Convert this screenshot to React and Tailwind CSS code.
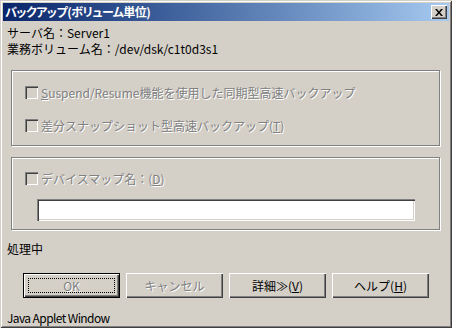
import React from "react";

const font = { fontFamily: '"Noto Sans CJK JP", "Liberation Sans", sans-serif' };

const raised =
  "shadow-[inset_1px_1px_0_#fff,inset_-1px_-1px_0_#404040,inset_-2px_-2px_0_#808080]";
const sunken =
  "shadow-[inset_1px_1px_0_#808080,inset_2px_2px_0_#404040,inset_-1px_-1px_0_#fff,inset_-2px_-2px_0_#d4d0c8]";
const etched = "border border-[#808080] shadow-[inset_1px_1px_0_#fff,1px_1px_0_#fff]";
const disabledText = "text-[#808080] [text-shadow:1px_1px_0_#fff]";

const Check = ({ children }) => (
  <div className="flex items-center h-[13px]">
    <span className={`w-[13px] h-[13px] bg-[#d4d0c8] shrink-0 ${sunken}`} />
    <span className={`ml-[3px] leading-[16px] whitespace-nowrap ${disabledText}`}>{children}</span>
  </div>
);

const Button = ({ children, disabled, isDefault }) => (
  <div
    className={`w-[97px] h-[25px] flex items-center justify-center bg-[#d4d0c8] relative ${
      isDefault ? "border border-black" : ""
    } ${raised} ${disabled ? disabledText : "text-black"}`}
  >
    {isDefault && (
      <span className="absolute left-[4px] right-[4px] top-[4px] bottom-[4px] border border-dotted border-black" />
    )}
    <span className="leading-[16px] whitespace-nowrap">{children}</span>
  </div>
);

export default function App() {
  return (
    <div
      className="w-[452px] h-[328px] bg-[#d4d0c8] p-[3px] text-[12px] text-black shadow-[inset_1px_1px_0_#d4d0c8,inset_-1px_-1px_0_#404040,inset_2px_2px_0_#fff,inset_-2px_-2px_0_#808080] overflow-hidden"
      style={font}
    >
      {/* title bar */}
      <div className="h-[18px] flex items-center justify-between bg-gradient-to-r from-[#0a246a] to-[#a6caf0] pl-[2px] pr-[2px]">
        <span className="text-white font-bold leading-[16px] whitespace-nowrap [font-feature-settings:'palt'] tracking-[-0.5px]">
          バックアップ(ボリューム単位)
        </span>
        <div className={`w-[16px] h-[14px] bg-[#d4d0c8] flex items-center justify-center ${raised}`}>
          <svg width="8" height="7" viewBox="0 0 8 7">
            <path d="M0 0h2l2 2.5L6 0h2L5 3.5 8 7H6L4 4.5 2 7H0l3-3.5z" fill="#000" />
          </svg>
        </div>
      </div>

      <div className="pl-[4px] pt-[4px]">
        <div className="leading-[16px] whitespace-nowrap">サーバ名：Server1</div>
        <div className="leading-[16px] whitespace-nowrap">業務ボリューム名：/dev/dsk/c1t0d3s1</div>
      </div>

      {/* group 1 */}
      <div className={`ml-[8px] mt-[13px] w-[429px] h-[76px] ${etched} pl-[13px] pt-[15px] flex flex-col gap-[20px]`}>
        <Check>
          <span className="underline">S</span>uspend/Resume機能を使用した同期型高速バックアップ
        </Check>
        <Check>
          差分スナップショット型高速バックアップ(<span className="underline">T</span>)
        </Check>
      </div>

      {/* group 2 */}
      <div className={`ml-[8px] mt-[11px] w-[429px] h-[73px] ${etched} pl-[13px] pt-[14px]`}>
        <Check>
          デバイスマップ名：(<span className="underline">D</span>)
        </Check>
        <div className={`ml-[12px] mt-[14px] w-[378px] h-[22px] bg-white ${sunken}`} />
      </div>

      <div className="pl-[4px] mt-[11px] leading-[16px]">処理中</div>

      <div className="ml-[20px] mt-[16px] flex gap-[6px]">
        <Button disabled isDefault>OK</Button>
        <Button disabled>キャンセル</Button>
        <Button>
          詳細≫(<span className="underline">V</span>)
        </Button>
        <Button>
          ヘルプ(<span className="underline">H</span>)
        </Button>
      </div>

      <div className="pl-[4px] mt-[12px] leading-[16px] whitespace-nowrap tracking-[-0.6px]">Java Applet Window</div>
    </div>
  );
}
